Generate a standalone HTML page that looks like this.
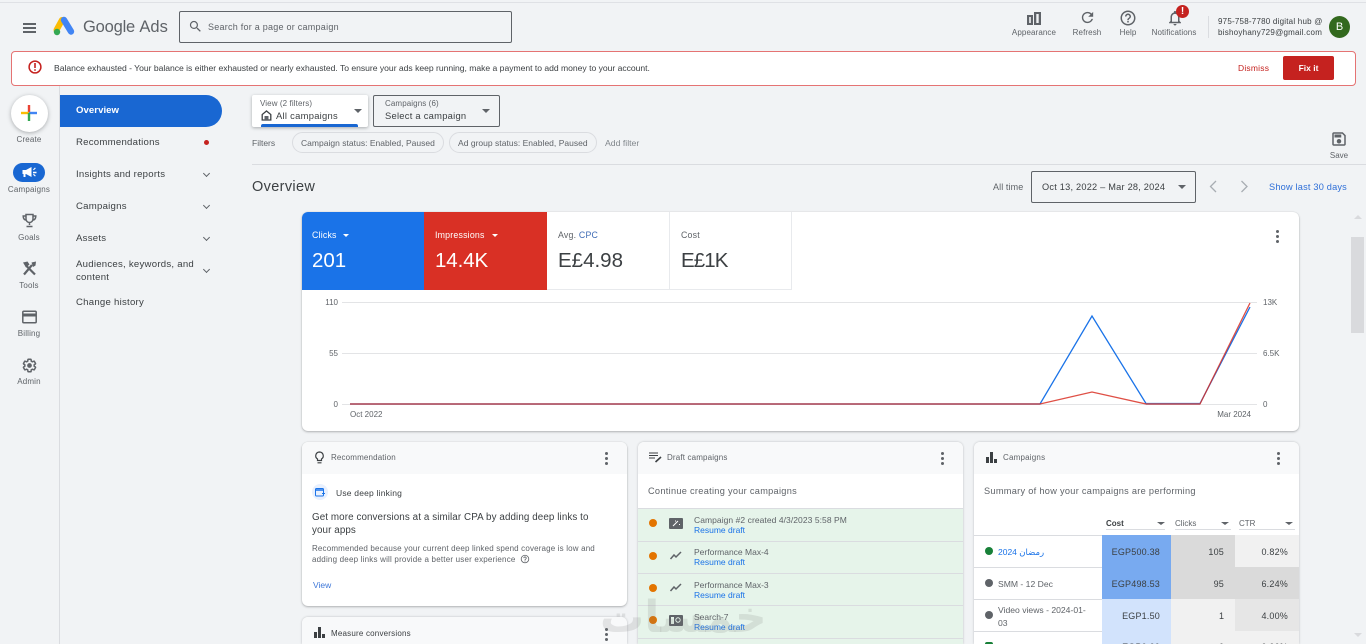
<!DOCTYPE html>
<html><head><meta charset="utf-8"><style>
html,body{margin:0;padding:0;width:1366px;height:644px;overflow:hidden;background:#f1f3f5}
body{position:relative;font-family:"Liberation Sans","DejaVu Sans",sans-serif;color:#3c4043;font-size:9px}
.t{position:absolute;white-space:nowrap;line-height:12px;transform:translateY(-5px)}
.c{transform:translate(-50%,-5px)}
.r{transform:translate(-100%,-5px)}
.b{position:absolute;box-sizing:border-box}
svg{position:absolute;overflow:visible}
.card{position:absolute;background:#fff;border-radius:6px;box-shadow:0 1px 2px rgba(60,64,67,.35),0 0 1px rgba(60,64,67,.2)}
.open{border-radius:6px 6px 0 0;box-shadow:0 0 2px rgba(60,64,67,.3)}
.hd{position:absolute;left:0;right:0;top:0;height:32px;background:#f8f9fa;border-radius:6px 6px 0 0}
.blue{color:#1a67d2}
.g{color:#5f6368}
.dots{position:absolute;width:3px;height:3px;border-radius:50%;background:#5f6368;box-shadow:0 5px 0 #5f6368,0 -5px 0 #5f6368}
.nav{font-size:9.6px;letter-spacing:.25px;color:#3c4043;left:76px}
.rail{font-size:8px;color:#5f6368;left:29px;letter-spacing:.15px}
.top{font-size:8px;color:#5f6368;letter-spacing:.1px}
.chev{position:absolute;left:204px;width:4px;height:4px;border-right:1.3px solid #5f6368;border-bottom:1.3px solid #5f6368;transform:rotate(45deg)}
.tri{position:absolute;width:0;height:0;border-left:4px solid transparent;border-right:4px solid transparent;border-top:4px solid #5f6368}
.val{font-size:20.5px;line-height:24px;transform:translateY(-11px)}
</style></head><body>
<div class="b" style="left:0;top:2px;width:1366px;height:1px;background:#dfe1e5"></div>

<!-- header -->
<div class="b" style="left:23px;top:23px;width:13px;height:1.5px;background:#5f6368;box-shadow:0 4px 0 #5f6368,0 8px 0 #5f6368"></div>
<svg style="left:53px;top:16px" width="22" height="20" viewBox="0 0 22 20">
<path d="M9 4 L3.500 14" stroke="#fbbc04" stroke-width="6" stroke-linecap="round"/>
<path d="M11 4 L18 15.500" stroke="#4285f4" stroke-width="6.400" stroke-linecap="round"/>
<circle cx="4" cy="16" r="3.200" fill="#34a853"/></svg>
<div class="t" style="left:83px;top:27px;font-size:16.500px;line-height:18px;transform:translateY(-9px);color:#5f6368;letter-spacing:-.2px">Google <span style="letter-spacing:0">Ads</span></div>
<div class="b" style="left:179px;top:11px;width:333px;height:32px;border:1px solid #5f6368;border-radius:2px"></div>
<svg style="left:188px;top:19px" width="15" height="15" viewBox="0 0 24 24"><path fill="#5f6368" d="M15.500 14h-.79l-.28-.27A6.470 6.470 0 0 0 16 9.500 6.500 6.500 0 1 0 9.500 16c1.610 0 3.090-.59 4.230-1.570l.27.28v.79l5 4.990L20.490 19l-4.990-5zm-6 0C7.010 14 5 11.990 5 9.500S7.010 5 9.500 5 14 7.010 14 9.500 11.990 14 9.500 14z"/></svg>
<div class="t g" style="left:208px;top:26px;font-size:9px;letter-spacing:.25px">Search for a page or campaign</div>

<svg style="left:1026px;top:10px" width="16" height="16" viewBox="0 0 16 16"><path fill="#5f6368" d="M1 5h6v10H1zM8 2h7v13H8z"/><path fill="#f1f3f5" d="M3.200 7h1.600v6H3.200zM10.300 4h2.400v9h-2.400z"/></svg>
<div class="t top c" style="left:1034px;top:32px">Appearance</div>
<svg style="left:1079px;top:9px" width="17" height="17" viewBox="0 0 24 24"><path fill="#5f6368" d="M17.650 6.350A7.958 7.958 0 0 0 12 4c-4.420 0-7.990 3.580-7.990 8s3.570 8 7.990 8c3.730 0 6.840-2.550 7.730-6h-2.080A5.990 5.990 0 0 1 12 18c-3.310 0-6-2.690-6-6s2.690-6 6-6c1.660 0 3.140.69 4.220 1.780L13 11h7V4l-2.350 2.350z"/></svg>
<div class="t top c" style="left:1087px;top:32px">Refresh</div>
<svg style="left:1119px;top:9px" width="18" height="18" viewBox="0 0 24 24"><path fill="#5f6368" d="M11 18h2v-2h-2v2zm1-16C6.480 2 2 6.480 2 12s4.480 10 10 10 10-4.480 10-10S17.520 2 12 2zm0 18c-4.410 0-8-3.590-8-8s3.590-8 8-8 8 3.590 8 8-3.590 8-8 8zm0-14c-2.210 0-4 1.790-4 4h2c0-1.100.9-2 2-2s2 .9 2 2c0 2-3 1.750-3 5h2c0-2.250 3-2.500 3-5 0-2.210-1.790-4-4-4z"/></svg>
<div class="t top c" style="left:1128px;top:32px">Help</div>
<svg style="left:1166px;top:9px" width="18" height="18" viewBox="0 0 24 24"><path fill="#5f6368" d="M12 22c1.100 0 2-.9 2-2h-4c0 1.100.9 2 2 2zm6-6v-5c0-3.070-1.630-5.640-4.500-6.320V4c0-.83-.67-1.500-1.500-1.500s-1.500.67-1.500 1.500v.68C7.640 5.360 6 7.920 6 11v5l-2 2v1h16v-1l-2-2zm-2 1H8v-6c0-2.480 1.510-4.500 4-4.500s4 2.020 4 4.500v6z"/></svg>
<div class="b" style="left:1176px;top:5px;width:13px;height:13px;border-radius:50%;background:#c5221f;color:#fff;font-size:10px;font-weight:bold;line-height:13px;text-align:center">!</div>
<div class="t top c" style="left:1174px;top:32px">Notifications</div>
<div class="b" style="left:1208px;top:16px;width:1px;height:22px;background:#dadce0"></div>
<div class="t" style="left:1218px;top:21px;font-size:8px;letter-spacing:.22px;color:#3c4043">975-758-7780 digital hub @</div>
<div class="t" style="left:1218px;top:32px;font-size:8px;letter-spacing:.25px;color:#3c4043">bishoyhany729@gmail.com</div>
<div class="b" style="left:1329px;top:16px;width:21px;height:22px;border-radius:50%;background:#33691e;color:#fff;font-size:11px;line-height:22px;text-align:center">B</div>

<!-- alert -->
<div class="b" style="left:11px;top:51px;width:1345px;height:35px;background:#fff;border:1px solid #e57373;border-radius:4px"></div>
<svg style="left:27px;top:59px" width="16" height="16" viewBox="0 0 16 16"><circle cx="8" cy="8" r="5.900" fill="none" stroke="#c5221f" stroke-width="1.500"/><path d="M7.200 4h1.600v5H7.200zM7.200 10.200h1.600v1.600H7.200z" fill="#c5221f"/></svg>
<div class="t" style="left:54px;top:67px;font-size:8.600px;letter-spacing:-.02px;color:#3c4043">Balance exhausted - Your balance is either exhausted or nearly exhausted. To ensure your ads keep running, make a payment to add money to your account.</div>
<div class="t" style="left:1238px;top:67px;font-size:8.500px;letter-spacing:.2px;color:#c5221f">Dismiss</div>
<div class="b" style="left:1283px;top:56px;width:51px;height:24px;background:#c5221f;border-radius:2px;color:#fff;font-size:8.500px;font-weight:bold;line-height:24px;text-align:center">Fix it</div>

<!-- rail -->
<div class="b" style="left:59px;top:86px;width:1px;height:558px;background:#dadce0"></div>
<div class="b" style="left:11px;top:95px;width:37px;height:37px;border-radius:50%;background:#fff;box-shadow:0 1px 4px rgba(60,64,67,.4)"></div>
<svg style="left:21px;top:105px" width="16" height="16" viewBox="0 0 16 16"><path d="M8 0v8" stroke="#ea4335" stroke-width="2.400"/><path d="M0 8h8" stroke="#fbbc04" stroke-width="2.400"/><path d="M8 8h8" stroke="#4285f4" stroke-width="2.400"/><path d="M8 8v8" stroke="#34a853" stroke-width="2.400"/></svg>
<div class="t rail c" style="top:139px">Create</div>
<div class="b" style="left:13px;top:163px;width:32px;height:19px;border-radius:10px;background:#1967d2"></div>
<svg style="left:22px;top:166px" width="15" height="13" viewBox="0 0 15 13"><path fill="#fff" d="M.5 4h3.500L9.500 1v10L4 8H3.500v3H1.500V8H.5zM11 3.500l2-2 .8.8-2 2zM11 5.800h3.500v1.400H11zM11 8.700l.8-1 2 2-.8.8z"/></svg>
<div class="t rail c blue" style="top:189px;letter-spacing:.2px">Campaigns</div>
<svg style="left:22px;top:213px" width="15" height="15" viewBox="0 0 15 15"><path fill="none" stroke="#5f6368" stroke-width="1.500" d="M4 1.500h7v4.500a3.500 3.500 0 0 1-7 0zM4 3H1.200c0 2.500 1 4 3.300 4.300M11 3h2.800c0 2.500-1 4-3.300 4.300M7.500 9.500v2.500M4.500 13.500h6"/></svg>
<div class="t rail c" style="top:237px">Goals</div>
<svg style="left:22px;top:261px" width="15" height="15" viewBox="0 0 15 15"><path stroke="#5f6368" stroke-width="2.200" d="M2 13.500L10 4M13 13.500L4 4.500" fill="none"/><path fill="#5f6368" d="M1 1.500L5.500 .5 7.500 3.500 4 6.500zM9.500 1.500L14 .5 13.500 4.500 11 6z"/></svg>
<div class="t rail c" style="top:285px">Tools</div>
<svg style="left:22px;top:310px" width="15" height="14" viewBox="0 0 15 14"><rect x=".8" y="1.300" width="13.400" height="11.400" rx="1" fill="none" stroke="#5f6368" stroke-width="1.500"/><rect x="1" y="3.500" width="13" height="3" fill="#5f6368"/></svg>
<div class="t rail c" style="top:333px">Billing</div>
<svg style="left:22px;top:358px" width="15" height="15" viewBox="0 0 24 24"><path fill="none" stroke="#5f6368" stroke-width="2.400" d="M19.430 12.980c.04-.32.07-.64.07-.98s-.03-.66-.07-.98l2.110-1.650c.19-.15.24-.42.12-.64l-2-3.460c-.12-.22-.39-.3-.61-.22l-2.490 1c-.52-.4-1.080-.73-1.690-.98l-.38-2.650A.488.488 0 0 0 14 2h-4c-.25 0-.46.18-.49.42l-.38 2.650c-.61.25-1.170.59-1.690.98l-2.490-1c-.23-.09-.49 0-.61.22l-2 3.460c-.13.22-.07.49.12.64l2.110 1.650c-.04.32-.07.65-.07.98s.03.66.07.98l-2.110 1.650c-.19.15-.24.42-.12.64l2 3.460c.12.22.39.3.61.22l2.490-1c.52.4 1.080.73 1.690.98l.38 2.650c.03.24.24.42.49.42h4c.25 0 .46-.18.49-.42l.38-2.650c.61-.25 1.170-.59 1.690-.98l2.490 1c.23.09.49 0 .61-.22l2-3.460c.12-.22.07-.49-.12-.64z"/><circle cx="12" cy="12" r="3.800" fill="#5f6368"/></svg>
<div class="t rail c" style="top:381px">Admin</div>

<!-- nav -->
<div class="b" style="left:60px;top:95px;width:162px;height:32px;background:#1967d2;border-radius:0 16px 16px 0"></div>
<div class="t nav" style="top:110px;color:#fff;font-weight:bold;letter-spacing:.05px">Overview</div>
<div class="t nav" style="top:142px">Recommendations</div>
<div class="b" style="left:204px;top:140px;width:5px;height:5px;border-radius:50%;background:#c5221f"></div>
<div class="t nav" style="top:174px">Insights and reports</div><div class="chev" style="top:171px"></div>
<div class="t nav" style="top:206px">Campaigns</div><div class="chev" style="top:203px"></div>
<div class="t nav" style="top:238px">Assets</div><div class="chev" style="top:235px"></div>
<div class="t nav" style="top:264px">Audiences, keywords, and</div><div class="t nav" style="top:277px">content</div><div class="chev" style="top:267px"></div>
<div class="t nav" style="top:302px">Change history</div>

<!-- toolbar -->
<div class="b" style="left:252px;top:95px;width:116px;height:32px;background:#fff;border-radius:2px;box-shadow:0 1px 3px rgba(60,64,67,.4)"></div>
<div class="b" style="left:261px;top:124px;width:97px;height:3px;background:#1967d2;border-radius:2px 2px 0 0"></div>
<div class="t" style="left:260px;top:103px;font-size:8px;letter-spacing:.1px;color:#5f6368">View (2 filters)</div>
<svg style="left:261px;top:110px" width="11" height="11" viewBox="0 0 11 11"><path fill="none" stroke="#3c4043" stroke-width="1.300" d="M1.200 10V4.500L5.500 1l4.300 3.500V10z"/><path fill="#5f6368" d="M3.500 6h4v4h-4z"/></svg>
<div class="t" style="left:276px;top:115px;font-size:9.400px;letter-spacing:.28px">All campaigns</div>
<div class="tri" style="left:354px;top:109px"></div>
<div class="b" style="left:373px;top:95px;width:127px;height:32px;border:1px solid #5f6368;border-radius:2px"></div>
<div class="t" style="left:385px;top:103px;font-size:8px;letter-spacing:.1px;color:#5f6368">Campaigns (6)</div>
<div class="t" style="left:385px;top:115px;font-size:9.400px;letter-spacing:.25px">Select a campaign</div>
<div class="tri" style="left:482px;top:109px"></div>

<div class="t g" style="left:252px;top:142px;font-size:8.500px">Filters</div>
<div class="b" style="left:292px;top:132px;width:152px;height:21px;border:1px solid #dadce0;border-radius:11px"></div>
<div class="t g" style="left:301px;top:142px;font-size:8.500px;letter-spacing:.02px">Campaign status: Enabled, Paused</div>
<div class="b" style="left:449px;top:132px;width:148px;height:21px;border:1px solid #dadce0;border-radius:11px"></div>
<div class="t g" style="left:458px;top:142px;font-size:8.500px;letter-spacing:.02px">Ad group status: Enabled, Paused</div>
<div class="t" style="left:605px;top:142px;font-size:8.700px;color:#80868b">Add filter</div>
<svg style="left:1330px;top:130px" width="18" height="18" viewBox="0 0 24 24"><path fill="#5f6368" d="M17 3H5c-1.110 0-2 .9-2 2v14c0 1.100.89 2 2 2h14c1.100 0 2-.9 2-2V7l-4-4zm2 16H5V5h11.170L19 7.830V19zm-7-7c-1.660 0-3 1.340-3 3s1.340 3 3 3 3-1.340 3-3-1.340-3-3-3zM6 6h9v4H6z"/></svg>
<div class="t c" style="left:1339px;top:155px;font-size:8px;color:#5f6368">Save</div>
<div class="b" style="left:252px;top:164px;width:1114px;height:1px;background:#dadce0"></div>

<div class="t" style="left:252px;top:186px;font-size:14.500px;line-height:16px;transform:translateY(-7px);letter-spacing:.35px">Overview</div>
<div class="t g" style="left:993px;top:186px;font-size:9px;letter-spacing:.1px">All time</div>
<div class="b" style="left:1031px;top:171px;width:165px;height:32px;border:1px solid #5f6368;border-radius:2px"></div>
<div class="t" style="left:1042px;top:186px;font-size:9.200px;letter-spacing:.23px">Oct 13, 2022 – Mar 28, 2024</div>
<div class="tri" style="left:1178px;top:185px"></div>
<svg style="left:1208px;top:180px" width="42" height="13" viewBox="0 0 42 13"><path d="M8 1L2.500 6.500 8 12M33.500 1L39 6.500 33.500 12" fill="none" stroke="#a8adb3" stroke-width="1.300"/></svg>
<div class="t blue" style="left:1269px;top:186px;font-size:9.200px;letter-spacing:.2px;color:#2f6fd8">Show last 30 days</div>

<!-- main card -->
<div class="card" style="left:302px;top:212px;width:997px;height:219px"></div>
<div class="b" style="left:302px;top:212px;width:122px;height:78px;background:#1a73e8;border-radius:6px 0 0 0"></div>
<div class="b" style="left:424px;top:212px;width:123px;height:78px;background:#d93025"></div>
<div class="b" style="left:547px;top:212px;width:123px;height:78px;border-right:1px solid #e8eaed;border-bottom:1px solid #e8eaed"></div>
<div class="b" style="left:670px;top:212px;width:122px;height:78px;border-right:1px solid #e8eaed;border-bottom:1px solid #e8eaed"></div>
<div class="t" style="left:312px;top:234px;font-size:8.800px;letter-spacing:.2px;color:#fff">Clicks</div>
<div class="tri" style="left:343px;top:234px;border-top-color:#fff;border-width:3px 3.500px 0"></div>
<div class="t" style="left:435px;top:234px;font-size:8.800px;letter-spacing:.2px;color:#fff">Impressions</div>
<div class="tri" style="left:492px;top:234px;border-top-color:#fff;border-width:3px 3.500px 0"></div>
<div class="t" style="left:558px;top:234px;font-size:8.800px;letter-spacing:.2px;color:#5f6368">Avg. <span style="color:#3f6bb5">CPC</span></div>
<div class="t" style="left:681px;top:234px;font-size:8.800px;letter-spacing:.2px;color:#5f6368">Cost</div>
<div class="t val" style="left:312px;top:260px;color:#fff">201</div>
<div class="t val" style="left:435px;top:260px;color:#fff;letter-spacing:-.1px">14.4K</div>
<div class="t val" style="left:558px;top:260px">E£4.98</div>
<div class="t val" style="left:681px;top:260px;letter-spacing:-.9px">E£1K</div>
<div class="dots" style="left:1276px;top:235px"></div>

<svg style="left:0;top:0" width="1366" height="644">
<path d="M342 302.500H1257M342 353.500H1257M342 404.500H1257" stroke="#e3e4e6" stroke-width="1" fill="none"/>
<path d="M350 404H1040L1092 316L1146 403.500H1200L1250 307" fill="none" stroke="#1a73e8" stroke-width="1.300"/>
<path d="M350 404H1040L1092 392L1146 404H1200L1250 303" fill="none" stroke="#d93025" stroke-width="1.300" opacity=".85"/>
<path d="M350 404H1040M1146 404H1200" stroke="#b5525f" stroke-width="1.600"/>
</svg>
<div class="t r g" style="left:338px;top:302px;font-size:8px">110</div>
<div class="t r g" style="left:338px;top:353px;font-size:8px">55</div>
<div class="t r g" style="left:338px;top:404px;font-size:8px">0</div>
<div class="t g" style="left:1263px;top:302px;font-size:8px">13K</div>
<div class="t g" style="left:1263px;top:353px;font-size:8px">6.5K</div>
<div class="t g" style="left:1263px;top:404px;font-size:8px">0</div>
<div class="t g" style="left:350px;top:414px;font-size:8px">Oct 2022</div>
<div class="t r g" style="left:1251px;top:414px;font-size:8px">Mar 2024</div>

<!-- recommendation -->
<div class="card" style="left:302px;top:442px;width:325px;height:164px"><div class="hd"></div></div>
<svg style="left:313px;top:451px" width="13" height="13" viewBox="0 0 13 13"><path fill="none" stroke="#3c4043" stroke-width="1.200" d="M6.500 1a3.800 3.800 0 0 0-2 7v1.500h4V8a3.800 3.800 0 0 0-2-7zM4.500 11.800h4"/></svg>
<div class="t" style="left:331px;top:457px;font-size:8px;letter-spacing:.15px;color:#5f6368">Recommendation</div>
<div class="dots" style="left:604.500px;top:457px"></div>
<div class="b" style="left:312px;top:484px;width:16px;height:16px;border-radius:50%;background:#e8f0fe"></div>
<svg style="left:315px;top:488px" width="10" height="9" viewBox="0 0 10 9"><rect x=".5" y=".5" width="8" height="7.500" rx="1" fill="none" stroke="#1a73e8"/><path d="M.5 2h8" stroke="#1a73e8" stroke-width="1.500"/><path d="M7 5.500h3M8.500 4v3" stroke="#1a73e8"/></svg>
<div class="t" style="left:336px;top:492px;font-size:8.500px;letter-spacing:.2px">Use deep linking</div>
<div class="t" style="left:312px;top:517px;font-size:9.800px;letter-spacing:.1px">Get more conversions at a similar CPA by adding deep links to</div>
<div class="t" style="left:312px;top:530px;font-size:9.800px;letter-spacing:.1px">your apps</div>
<div class="t g" style="left:312px;top:548px;font-size:8px;letter-spacing:.16px">Recommended because your current deep linked spend coverage is low and</div>
<div class="t g" style="left:312px;top:559px;font-size:8px;letter-spacing:.2px">adding deep links will provide a better user experience</div>
<svg style="left:520px;top:554px" width="10" height="10" viewBox="0 0 24 24"><path fill="#5f6368" d="M11 18h2v-2h-2v2zm1-16C6.480 2 2 6.480 2 12s4.480 10 10 10 10-4.480 10-10S17.520 2 12 2zm0 18c-4.410 0-8-3.590-8-8s3.590-8 8-8 8 3.590 8 8-3.590 8-8 8zm0-14c-2.210 0-4 1.790-4 4h2c0-1.100.9-2 2-2s2 .9 2 2c0 2-3 1.750-3 5h2c0-2.250 3-2.500 3-5 0-2.210-1.790-4-4-4z"/></svg>
<div class="t" style="left:313px;top:584px;font-size:8.500px;color:#3f78d8">View</div>

<!-- measure conversions -->
<div class="card open" style="left:302px;top:617px;width:325px;height:27px"><div class="hd" style="height:27px"></div></div>
<svg style="left:314px;top:627px" width="11" height="11" viewBox="0 0 11 11"><path fill="#3c4043" d="M0 5h3v6H0zM4 0h3v11H4zM8 7h3v4H8z"/></svg>
<div class="t" style="left:331px;top:633px;font-size:8px;letter-spacing:.2px">Measure conversions</div>
<div class="dots" style="left:604.500px;top:633px"></div>

<!-- draft -->
<div class="card open" style="left:638px;top:442px;width:325px;height:202px"><div class="hd"></div></div>
<svg style="left:649px;top:452px" width="13" height="11" viewBox="0 0 13 11"><path stroke="#3c4043" stroke-width="1.100" d="M0 1h9M0 3.500h9M0 6h6"/><path stroke="#3c4043" stroke-width="1.600" d="M6.500 10L12 5"/></svg>
<div class="t" style="left:667px;top:457px;font-size:8px;letter-spacing:.15px;color:#5f6368">Draft campaigns</div>
<div class="dots" style="left:940.500px;top:457px"></div>
<div class="t" style="left:648px;top:490px;font-size:9.200px;letter-spacing:.3px;color:#5f6368">Continue creating your campaigns</div>
<div class="b" style="left:638px;top:508px;width:325px;height:136px;background:#e6f4ea"></div>
<div class="b" style="left:638px;top:508px;width:325px;height:1px;background:#dadce0"></div>
<div class="b" style="left:638px;top:541px;width:325px;height:1px;background:#dadce0"></div>
<div class="b" style="left:638px;top:573px;width:325px;height:1px;background:#dadce0"></div>
<div class="b" style="left:638px;top:605px;width:325px;height:1px;background:#dadce0"></div>
<div class="b" style="left:638px;top:638px;width:325px;height:1px;background:#dadce0"></div>
<div class="b" style="left:649px;top:519px;width:8px;height:8px;border-radius:50%;background:#e37400"></div>
<div class="b" style="left:649px;top:552px;width:8px;height:8px;border-radius:50%;background:#e37400"></div>
<div class="b" style="left:649px;top:584px;width:8px;height:8px;border-radius:50%;background:#e37400"></div>
<div class="b" style="left:649px;top:616px;width:8px;height:8px;border-radius:50%;background:#e37400"></div>
<svg style="left:669px;top:518px" width="14" height="11" viewBox="0 0 14 11"><rect width="14" height="11" rx="1" fill="#5f6368"/><path d="M4 8l5-5M10 6.500h1M6 3h1" stroke="#fff"/></svg>
<svg style="left:670px;top:551px" width="12" height="9" viewBox="0 0 12 9"><path d="M.5 8L4 4l2 2 5-5" fill="none" stroke="#5f6368" stroke-width="1.500"/></svg>
<svg style="left:670px;top:583px" width="12" height="9" viewBox="0 0 12 9"><path d="M.5 8L4 4l2 2 5-5" fill="none" stroke="#5f6368" stroke-width="1.500"/></svg>
<svg style="left:669px;top:615px" width="14" height="11" viewBox="0 0 14 11"><rect width="14" height="11" rx="1" fill="#5f6368"/><rect x="2" y="2" width="3" height="7" fill="#e6f4ea"/><circle cx="9" cy="5" r="2.200" fill="none" stroke="#e6f4ea"/></svg>
<div class="t" style="left:694px;top:519px;font-size:8.500px;letter-spacing:.06px;color:#5f6368">Campaign #2 created 4/3/2023 5:58 PM</div>
<div class="t" style="left:694px;top:529px;font-size:8.500px;color:#1a73e8">Resume draft</div>
<div class="t" style="left:694px;top:551px;font-size:8.500px;color:#5f6368">Performance Max-4</div>
<div class="t" style="left:694px;top:561px;font-size:8.500px;color:#1a73e8">Resume draft</div>
<div class="t" style="left:694px;top:584px;font-size:8.500px;color:#5f6368">Performance Max-3</div>
<div class="t" style="left:694px;top:594px;font-size:8.500px;color:#1a73e8">Resume draft</div>
<div class="t" style="left:694px;top:616px;font-size:8.500px;color:#5f6368">Search-7</div>
<div class="t" style="left:694px;top:626px;font-size:8.500px;color:#1a73e8">Resume draft</div>

<!-- campaigns -->
<div class="card open" style="left:974px;top:442px;width:325px;height:202px"><div class="hd"></div></div>
<svg style="left:986px;top:452px" width="11" height="11" viewBox="0 0 11 11"><path fill="#3c4043" d="M0 5h3v6H0zM4 0h3v11H4zM8 7h3v4H8z"/></svg>
<div class="t" style="left:1003px;top:457px;font-size:8px;letter-spacing:.2px;color:#5f6368">Campaigns</div>
<div class="dots" style="left:1276.500px;top:457px"></div>
<div class="t" style="left:984px;top:490px;font-size:9.200px;letter-spacing:.3px;color:#5f6368">Summary of how your campaigns are performing</div>
<div class="t" style="left:1106px;top:523px;font-size:8px;font-weight:bold;color:#3c4043">Cost</div>
<div class="tri" style="left:1157px;top:522px;border-top-color:#5f6368;border-width:3px 4px 0"></div>
<div class="b" style="left:1106px;top:529px;width:59px;height:1px;background:#dadce0"></div>
<div class="t g" style="left:1175px;top:523px;font-size:8px">Clicks</div>
<div class="tri" style="left:1221px;top:522px;border-width:3px 4px 0"></div>
<div class="b" style="left:1175px;top:529px;width:56px;height:1px;background:#dadce0"></div>
<div class="t g" style="left:1239px;top:523px;font-size:8px">CTR</div>
<div class="tri" style="left:1285px;top:522px;border-width:3px 4px 0"></div>
<div class="b" style="left:1239px;top:529px;width:56px;height:1px;background:#dadce0"></div>

<div class="b" style="left:1102px;top:535px;width:69px;height:32px;background:#78aaf0"></div>
<div class="b" style="left:1102px;top:567px;width:69px;height:32px;background:#78aaf0"></div>
<div class="b" style="left:1102px;top:599px;width:69px;height:45px;background:#d2e3fc"></div>
<div class="b" style="left:1171px;top:535px;width:64px;height:64px;background:#dadada"></div>
<div class="b" style="left:1171px;top:599px;width:64px;height:45px;background:#f1f1f1"></div>
<div class="b" style="left:1235px;top:535px;width:64px;height:32px;background:#f1f1f1"></div>
<div class="b" style="left:1235px;top:567px;width:64px;height:32px;background:#dadada"></div>
<div class="b" style="left:1235px;top:599px;width:64px;height:32px;background:#e6e6e6"></div>
<div class="b" style="left:1235px;top:631px;width:64px;height:13px;background:#f1f1f1"></div>
<div class="b" style="left:974px;top:535px;width:128px;height:1px;background:#dadce0"></div>
<div class="b" style="left:974px;top:567px;width:128px;height:1px;background:#dadce0"></div>
<div class="b" style="left:974px;top:599px;width:128px;height:1px;background:#dadce0"></div>
<div class="b" style="left:974px;top:631px;width:128px;height:1px;background:#dadce0"></div>
<div class="b" style="left:985px;top:547px;width:8px;height:8px;border-radius:50%;background:#188038"></div>
<div class="b" style="left:985px;top:579px;width:8px;height:8px;border-radius:50%;background:#5f6368"></div>
<div class="b" style="left:985px;top:611px;width:8px;height:8px;border-radius:50%;background:#5f6368"></div>
<div class="b" style="left:985px;top:642px;width:8px;height:2px;background:#188038;border-radius:4px 4px 0 0"></div>
<div class="t" style="left:998px;top:551px;font-size:8.500px;color:#1a73e8"><bdi>رمضان 2024</bdi></div>
<div class="t g" style="left:998px;top:583px;font-size:8.600px">SMM - 12 Dec</div>
<div class="t g" style="left:998px;top:609px;font-size:8.600px">Video views - 2024-01-</div>
<div class="t g" style="left:998px;top:622px;font-size:8.600px">03</div>
<div class="t r" style="left:1160px;top:551px;font-size:9px;letter-spacing:.2px">EGP500.38</div>
<div class="t r" style="left:1160px;top:583px;font-size:9px;letter-spacing:.2px">EGP498.53</div>
<div class="t r" style="left:1160px;top:615px;font-size:9px;letter-spacing:.2px">EGP1.50</div>
<div class="t r" style="left:1224px;top:551px;font-size:9px;letter-spacing:.2px">105</div>
<div class="t r" style="left:1224px;top:583px;font-size:9px;letter-spacing:.2px">95</div>
<div class="t r" style="left:1224px;top:615px;font-size:9px">1</div>
<div class="t r" style="left:1288px;top:551px;font-size:9px;letter-spacing:.2px">0.82%</div>
<div class="t r" style="left:1288px;top:583px;font-size:9px;letter-spacing:.2px">6.24%</div>
<div class="t r" style="left:1288px;top:615px;font-size:9px;letter-spacing:.2px">4.00%</div>
<div class="b" style="left:1102px;top:640px;width:197px;height:4px;overflow:hidden">
<div class="t r" style="left:58px;top:6px;font-size:9px;letter-spacing:.2px">EGP0.00</div>
<div class="t r" style="left:122px;top:6px;font-size:9px">0</div>
<div class="t r" style="left:186px;top:6px;font-size:9px;letter-spacing:.2px">0.00%</div>
</div>

<!-- scrollbar -->
<div class="b" style="left:1351px;top:237px;width:13px;height:96px;background:#d9dadd"></div>
<div class="b" style="left:1354px;top:215px;width:0;height:0;border-left:4px solid transparent;border-right:4px solid transparent;border-bottom:4px solid #d9dadd"></div>
<div class="b" style="left:1354px;top:633px;width:0;height:0;border-left:4px solid transparent;border-right:4px solid transparent;border-top:4px solid #d9dadd"></div>

<!-- watermark -->
<div class="t" dir="rtl" style="left:600px;top:618px;font-family:'DejaVu Sans',sans-serif;font-size:44px;line-height:50px;transform:translateY(-25px);font-weight:bold;color:rgba(120,120,120,.17)">خمسات</div>
</body></html>
